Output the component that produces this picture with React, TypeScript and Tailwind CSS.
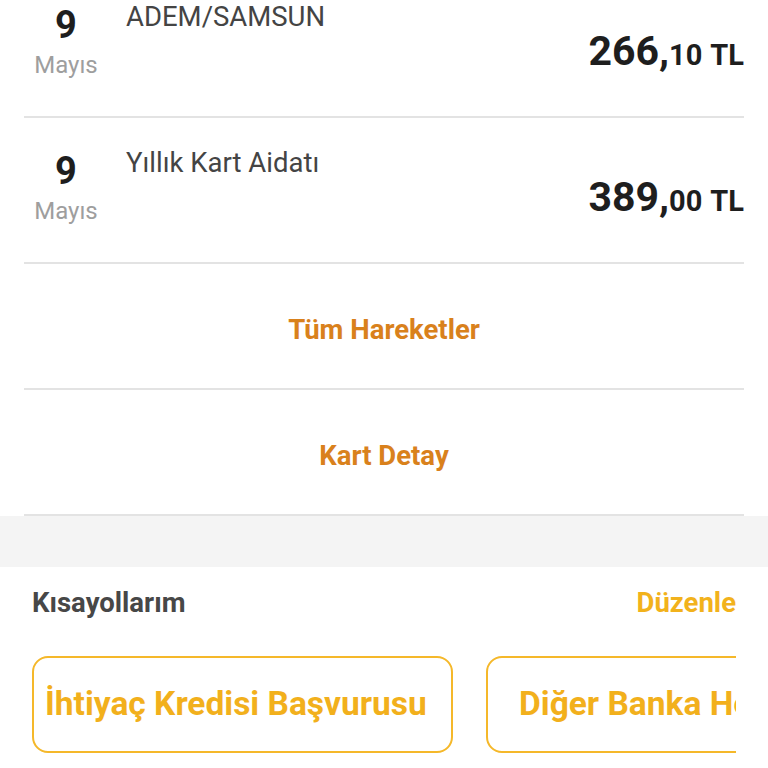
import type { ReactNode } from 'react';

type Txn = { day: string; month: string; title: string; whole: string; cents: string };

const txns: Txn[] = [
  { day: '9', month: 'Mayıs', title: 'ADEM/SAMSUN', whole: '266,', cents: '10' },
  { day: '9', month: 'Mayıs', title: 'Yıllık Kart Aidatı', whole: '389,', cents: '00' },
];

const font = { fontFamily: 'Roboto, "Noto Sans", sans-serif' };

export default function App() {
  return (
    <div className="h-[768px] w-[768px] overflow-hidden bg-white" style={font}>
      <div className="-mt-[28px] px-6">
        {txns.map((t, i) => (
          <TxnRow key={i} txn={t} />
        ))}
        <LinkRow>Tüm Hareketler</LinkRow>
        <LinkRow>Kart Detay</LinkRow>
      </div>
      <div className="h-[51px] bg-[#f4f4f4]" />
      <Shortcuts />
    </div>
  );
}

function TxnRow({ txn }: { txn: Txn }) {
  return (
    <div className="flex h-[146px] border-b-2 border-[#e3e3e3]">
      <div className="flex w-[84px] shrink-0 flex-col items-center pt-[34px]">
        <div className="text-[38px] font-bold leading-none text-[#1e1e1e]">{txn.day}</div>
        <div className="mt-[9px] text-[24px] leading-none text-[#9e9e9e]">{txn.month}</div>
      </div>
      <div className="ml-[18px] min-w-0 flex-1 pt-[31px] text-[27.5px] leading-none text-[#444]">{txn.title}</div>
      <div className="flex items-baseline self-start pt-[59px] font-bold leading-none text-[#1e1e1e]">
        <span className="text-[41px]">{txn.whole}</span>
        <span className="text-[29px]">{txn.cents}</span>
        <span className="ml-[8px] text-[29px]">TL</span>
      </div>
    </div>
  );
}

function LinkRow({ children }: { children: ReactNode }) {
  return (
    <div className="flex h-[126px] items-center justify-center border-b-2 border-[#e3e3e3] pt-[8px] text-[27.5px] font-bold text-[#d9811c]">
      {children}
    </div>
  );
}

function Shortcuts() {
  return (
    <div className="px-8">
      <div className="flex h-[70px] items-center justify-between pt-[2px]">
        <span className="text-[27.5px] font-bold text-[#474747]">Kısayollarım</span>
        <span className="text-[27.5px] font-bold text-[#f2b21c]">Düzenle</span>
      </div>
      <div className="mt-[19px] flex gap-[33px] overflow-hidden">
        <ShortcutButton className="w-[421px] pl-[11px]">İhtiyaç Kredisi Başvurusu</ShortcutButton>
        <ShortcutButton className="px-[31px]">Diğer Banka Hesabına Para Transferi</ShortcutButton>
      </div>
    </div>
  );
}

function ShortcutButton({ children, className }: { children: ReactNode; className: string }) {
  return (
    <div
      className={`flex h-[97px] shrink-0 items-center whitespace-nowrap rounded-[16px] border-2 border-[#f5b82a] text-[33.5px] font-bold text-[#f2b01c] ${className}`}
    >
      {children}
    </div>
  );
}
